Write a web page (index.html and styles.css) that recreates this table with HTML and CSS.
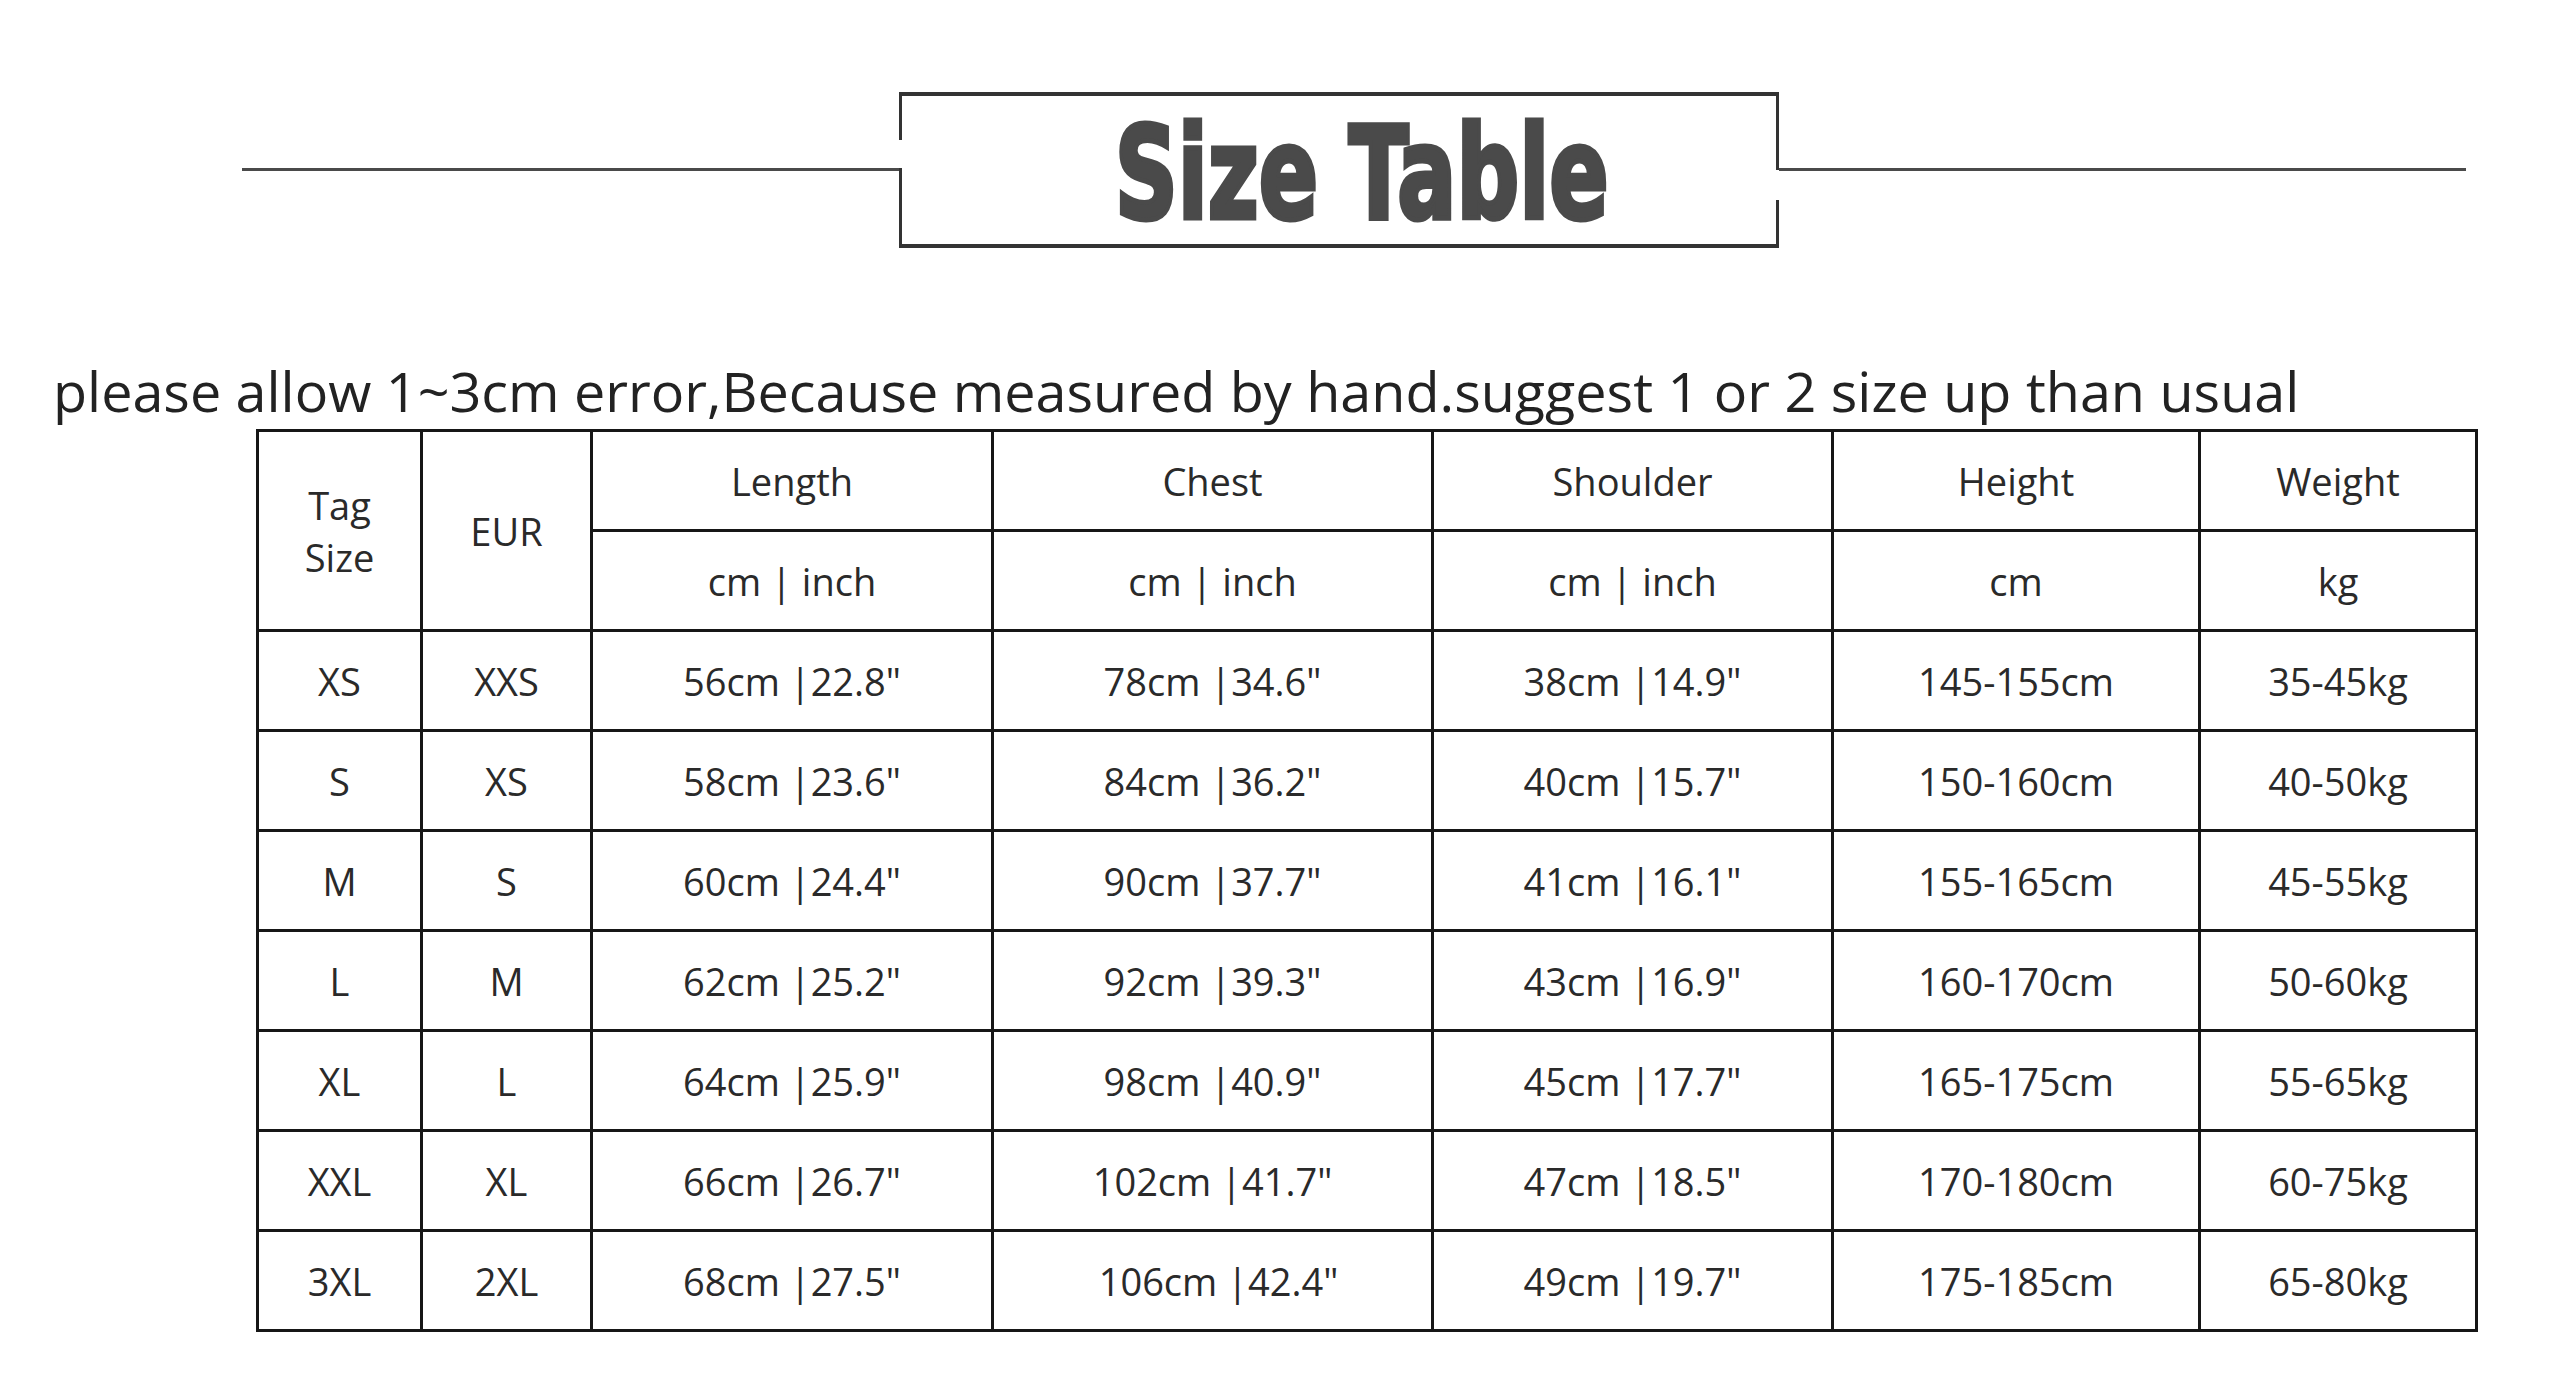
FILE: index.html
```html
<!DOCTYPE html>
<html lang="en">
<head>
<meta charset="utf-8">
<title>Size Table</title>
<link rel="stylesheet" href="styles.css">
</head>
<body>
<header class="banner">
  <div class="rule rule-left"></div>
  <div class="title-box"><h1 class="title"><span class="title-text">Size Table</span></h1></div>
  <div class="rule rule-right"></div>
</header>
<p class="note">please allow 1~3cm error,Because measured by hand.suggest 1 or 2 size up than usual</p>
<div class="size-grid">
  <div class="cell span2 two-line">Tag<br>Size</div>
  <div class="cell span2">EUR</div>
  <div class="cell">Length</div>
  <div class="cell">Chest</div>
  <div class="cell">Shoulder</div>
  <div class="cell">Height</div>
  <div class="cell">Weight</div>
  <div class="cell">cm | inch</div>
  <div class="cell">cm | inch</div>
  <div class="cell">cm | inch</div>
  <div class="cell">cm</div>
  <div class="cell">kg</div>

  <div class="cell">XS</div><div class="cell">XXS</div><div class="cell">56cm |22.8"</div><div class="cell">78cm |34.6"</div><div class="cell">38cm |14.9"</div><div class="cell">145-155cm</div><div class="cell">35-45kg</div>
  <div class="cell">S</div><div class="cell">XS</div><div class="cell">58cm |23.6"</div><div class="cell">84cm |36.2"</div><div class="cell">40cm |15.7"</div><div class="cell">150-160cm</div><div class="cell">40-50kg</div>
  <div class="cell">M</div><div class="cell">S</div><div class="cell">60cm |24.4"</div><div class="cell">90cm |37.7"</div><div class="cell">41cm |16.1"</div><div class="cell">155-165cm</div><div class="cell">45-55kg</div>
  <div class="cell">L</div><div class="cell">M</div><div class="cell">62cm |25.2"</div><div class="cell">92cm |39.3"</div><div class="cell">43cm |16.9"</div><div class="cell">160-170cm</div><div class="cell">50-60kg</div>
  <div class="cell">XL</div><div class="cell">L</div><div class="cell">64cm |25.9"</div><div class="cell">98cm |40.9"</div><div class="cell">45cm |17.7"</div><div class="cell">165-175cm</div><div class="cell">55-65kg</div>
  <div class="cell">XXL</div><div class="cell">XL</div><div class="cell">66cm |26.7"</div><div class="cell">102cm |41.7"</div><div class="cell">47cm |18.5"</div><div class="cell">170-180cm</div><div class="cell">60-75kg</div>
  <div class="cell">3XL</div><div class="cell">2XL</div><div class="cell">68cm |27.5"</div><div class="cell shift">106cm |42.4"</div><div class="cell">49cm |19.7"</div><div class="cell">175-185cm</div><div class="cell">65-80kg</div>
</div>
</body>
</html>
```
FILE: styles.css
```css
html, body {
  margin: 0;
  padding: 0;
  background: #ffffff;
}

body {
  font-family: "Open Sans", "DejaVu Sans", sans-serif;
  color: #262626;
}

.banner {
  display: flex;
  align-items: flex-start;
  padding: 92px 0 0 242px;
}

.rule {
  height: 3px;
  margin-top: 76px;
  background: #4a4a4a;
}

.rule-left { width: 657px; }
.rule-right { width: 687px; }

.title-box {
  box-sizing: border-box;
  width: 880px;
  height: 156px;
  border-top: 4px solid #333333;
  border-bottom: 4px solid #333333;
  background:
    linear-gradient(#333333, #333333) left 0 top 0 / 3px 48px no-repeat,
    linear-gradient(#333333, #333333) left 0 top 76px / 3px 80px no-repeat,
    linear-gradient(#333333, #333333) right 0 top 0 / 3px 78px no-repeat,
    linear-gradient(#333333, #333333) right 0 bottom 0 / 3px 48px no-repeat;
  background-origin: border-box;
  display: flex;
  justify-content: center;
  align-items: flex-start;
  padding: 14px 0 0 46px;
}

.title {
  margin: 0;
  font-family: "DejaVu Sans", "Liberation Sans", sans-serif;
  font-weight: bold;
  font-size: 128px;
  line-height: 128px;
  color: #4a4a4a;
}

.title-text {
  display: inline-block;
  white-space: nowrap;
  transform: scaleX(0.685);
  transform-origin: center center;
  -webkit-text-stroke: 5px #4a4a4a;
}

.note {
  margin: 104px 0 0 53px;
  font-family: "Open Sans", "DejaVu Sans", sans-serif;
  font-size: 55.7px;
  line-height: 76px;
  color: #222222;
  white-space: nowrap;
}

.size-grid {
  display: grid;
  grid-template-columns: 164px 170px 401px 440px 400px 367px 277px;
  grid-template-rows: repeat(9, 100px);
  margin: 1px 0 0 256px;
  width: max-content;
  border-left: 3px solid #161616;
  border-top: 3px solid #161616;
}

.cell {
  box-sizing: border-box;
  border-right: 3px solid #161616;
  border-bottom: 3px solid #161616;
  display: flex;
  align-items: center;
  justify-content: center;
  text-align: center;
  font-size: 38px;
  line-height: 52px;
  color: #2a2a2a;
  white-space: nowrap;
}

.span2 {
  grid-row: span 2;
}

.two-line {
  white-space: normal;
}

.shift {
  padding-left: 12px;
}
```
